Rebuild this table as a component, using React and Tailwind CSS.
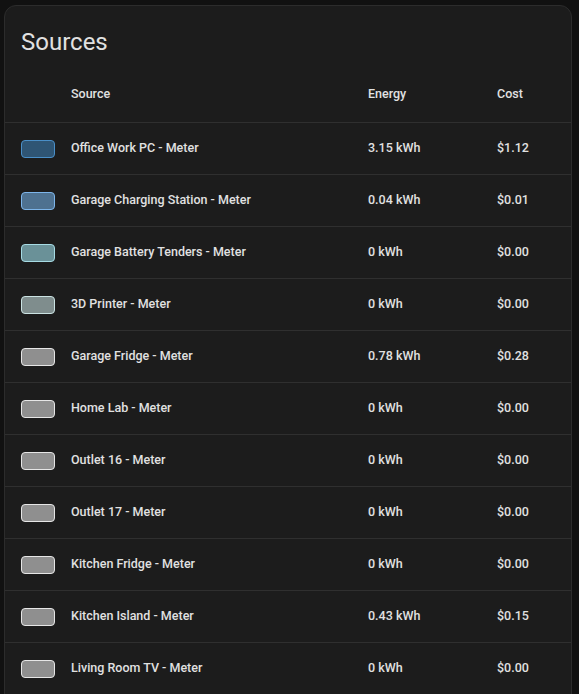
import React from 'react';

const rows = [
  { name: 'Office Work PC - Meter', energy: '3.15 kWh', cost: '$1.12', fill: '#2f5574', line: '#4a8fc8' },
  { name: 'Garage Charging Station - Meter', energy: '0.04 kWh', cost: '$0.01', fill: '#4e7190', line: '#7db5ea' },
  { name: 'Garage Battery Tenders - Meter', energy: '0 kWh', cost: '$0.00', fill: '#6a9198', line: '#a6dbe4' },
  { name: '3D Printer - Meter', energy: '0 kWh', cost: '$0.00', fill: '#7f8d8d', line: '#cbe3e3' },
  { name: 'Garage Fridge - Meter', energy: '0.78 kWh', cost: '$0.28', fill: '#8f8f8f', line: '#e6e6e6' },
  { name: 'Home Lab - Meter', energy: '0 kWh', cost: '$0.00', fill: '#8f8f8f', line: '#e6e6e6' },
  { name: 'Outlet 16 - Meter', energy: '0 kWh', cost: '$0.00', fill: '#8f8f8f', line: '#e6e6e6' },
  { name: 'Outlet 17 - Meter', energy: '0 kWh', cost: '$0.00', fill: '#8f8f8f', line: '#e6e6e6' },
  { name: 'Kitchen Fridge - Meter', energy: '0 kWh', cost: '$0.00', fill: '#8f8f8f', line: '#e6e6e6' },
  { name: 'Kitchen Island - Meter', energy: '0.43 kWh', cost: '$0.15', fill: '#8f8f8f', line: '#e6e6e6' },
  { name: 'Living Room TV - Meter', energy: '0 kWh', cost: '$0.00', fill: '#8f8f8f', line: '#e6e6e6' },
];

const grid = 'grid grid-cols-[66px_297px_129px_1fr] items-center';

export default function App() {
  return (
    <div
      className="min-h-screen bg-[#111111] pl-[4px] pt-[5px] overflow-hidden"
      style={{ fontFamily: 'Roboto, "Noto Sans", sans-serif' }}
    >
      <div className="w-[568px] bg-[#1c1c1c] border border-[#2c2c2c] rounded-[12px] text-[#e1e1e1] pb-[24px]">
        <div className="h-[61px] pt-[20px] px-[16px] text-[24px] leading-[32px] font-normal">Sources</div>

        <div className={grid + ' h-[56px] border-b border-[#2f2f2f] text-[12.5px] font-medium'}>
          <div />
          <div>Source</div>
          <div>Energy</div>
          <div>Cost</div>
        </div>

        {rows.map((r) => (
          <div key={r.name} className={grid + ' h-[52px] border-b border-[#2f2f2f] text-[12.5px] font-medium'}>
            <div className="pl-[16px]">
              <div
                className="w-[34px] h-[18px] rounded-[4px] border"
                style={{ backgroundColor: r.fill, borderColor: r.line }}
              />
            </div>
            <div className="truncate">{r.name}</div>
            <div>{r.energy}</div>
            <div>{r.cost}</div>
          </div>
        ))}
      </div>
    </div>
  );
}
